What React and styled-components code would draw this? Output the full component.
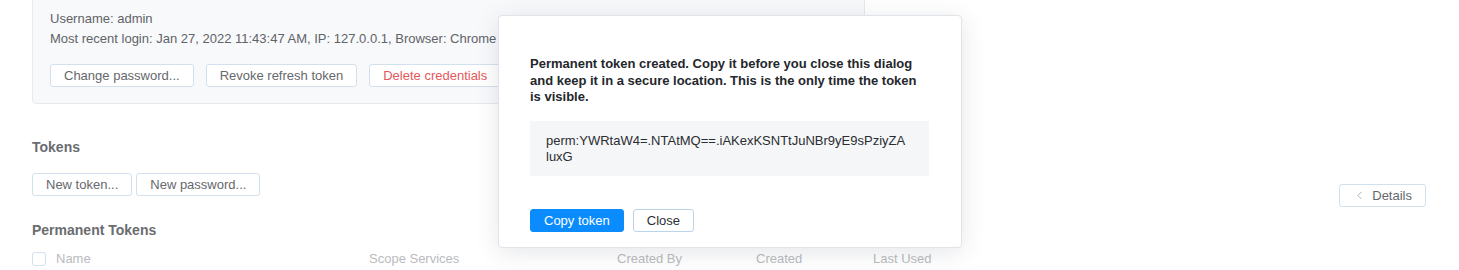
import styled, { createGlobalStyle } from "styled-components";
import { ChevronLeft } from "lucide-react";

const GlobalStyle = createGlobalStyle`
  html, body {
    margin: 0;
    padding: 0;
    background: #ffffff;
    overflow: hidden;
  }
  body {
    font-family: "Liberation Sans", Arial, sans-serif;
    font-size: 13px;
    color: #5f6266;
  }
`;

const Page = styled.div`
  position: relative;
  display: flex;
  justify-content: space-between;
  padding: 0 33px 0 32px;
  height: 270px;
  overflow: hidden;
`;

const Main = styled.div`
  display: flex;
  flex-direction: column;
  width: 960px;
`;

const Side = styled.div`
  padding-top: 184px;
`;

const Card = styled.div`
  width: 833px;
  box-sizing: border-box;
  margin-top: -8px;
  padding: 16px 17px 16px;
  background: #f8f9fb;
  border: 1px solid #e6e9ee;
  border-radius: 4px;
`;

const InfoLine = styled.div`
  line-height: 20px;
  white-space: nowrap;
  overflow: hidden;
  color: #606367;
`;

const ButtonRow = styled.div`
  display: flex;
  gap: ${(p) => p.$gap || 12}px;
  margin-top: ${(p) => p.$top || 0}px;
`;

const Button = styled.button`
  height: 23px;
  padding: 0 13px;
  display: inline-flex;
  align-items: center;
  gap: 6px;
  font-family: inherit;
  font-size: 13px;
  color: ${(p) => (p.$danger ? "#e5585c" : "#65686c")};
  background: #ffffff;
  border: 1px solid #d3e0ee;
  border-radius: 3px;
  white-space: nowrap;
  cursor: pointer;
`;

const Heading = styled.h3`
  margin: ${(p) => p.$top}px 0 0;
  font-size: 14px;
  line-height: 20px;
  font-weight: 700;
  color: #6a6c70;
`;

const HeaderRow = styled.div`
  display: grid;
  grid-template-columns: 24px 313px 248px 139px 117px auto;
  align-items: center;
  margin-top: 9px;
  line-height: 20px;
  color: #b9bbbe;
`;

const Checkbox = styled.span`
  width: 12px;
  height: 12px;
  border: 1px solid #d3e0ee;
  border-radius: 3px;
  background: #fff;
`;

const Dialog = styled.div`
  position: absolute;
  left: 498px;
  top: 15px;
  width: 464px;
  height: 233px;
  box-sizing: border-box;
  padding: 40px 32px 0 31px;
  background: #ffffff;
  border: 1px solid #e0e3e8;
  border-radius: 4px;
  box-shadow: 0 4px 24px rgba(40, 50, 70, 0.12);
`;

const DialogText = styled.p`
  margin: 0;
  font-weight: 700;
  line-height: 16.5px;
  color: #24272b;
`;

const TokenBox = styled.div`
  margin-top: 15px;
  padding: 12px 16px 11px;
  background: #f5f6f8;
  line-height: 16px;
  color: #2a2d31;
`;

const TokenLine = styled.span`
  display: block;
  white-space: nowrap;
`;

const DialogActions = styled.div`
  display: flex;
  gap: 9px;
  margin-top: 33px;
`;

const PrimaryButton = styled(Button)`
  background: #0a8cff;
  border-color: #0a8cff;
  color: #ffffff;
`;

const PlainButton = styled(Button)`
  color: #2c2f33;
  border-color: #bcd3ec;
`;

export default function App() {
  return (
    <>
      <GlobalStyle />
      <Page>
        <Main>
          <Card>
            <InfoLine>Username: admin</InfoLine>
            <InfoLine>
              Most recent login: Jan 27, 2022 11:43:47 AM, IP: 127.0.0.1, Browser: Chrome 97, OS: macOS
            </InfoLine>
            <ButtonRow $top={15}>
              <Button>Change password...</Button>
              <Button>Revoke refresh token</Button>
              <Button $danger>Delete credentials</Button>
            </ButtonRow>
          </Card>

          <Heading $top={33}>Tokens</Heading>
          <ButtonRow $top={16} $gap={4}>
            <Button>New token...</Button>
            <Button>New password...</Button>
          </ButtonRow>

          <Heading $top={24}>Permanent Tokens</Heading>
          <HeaderRow>
            <Checkbox />
            <span>Name</span>
            <span>Scope Services</span>
            <span>Created By</span>
            <span>Created</span>
            <span>Last Used</span>
          </HeaderRow>
        </Main>

        <Side>
          <Button>
            <ChevronLeft size={13} strokeWidth={1.5} color="#9a9da1" />
            Details
          </Button>
        </Side>

        <Dialog>
          <DialogText>
            Permanent token created. Copy it before you close this dialog and keep it in a secure
            location. This is the only time the token is visible.
          </DialogText>
          <TokenBox>
            <TokenLine>perm:YWRtaW4=.NTAtMQ==.iAKexKSNTtJuNBr9yE9sPziyZA</TokenLine>
            <TokenLine>luxG</TokenLine>
          </TokenBox>
          <DialogActions>
            <PrimaryButton>Copy token</PrimaryButton>
            <PlainButton>Close</PlainButton>
          </DialogActions>
        </Dialog>
      </Page>
    </>
  );
}
